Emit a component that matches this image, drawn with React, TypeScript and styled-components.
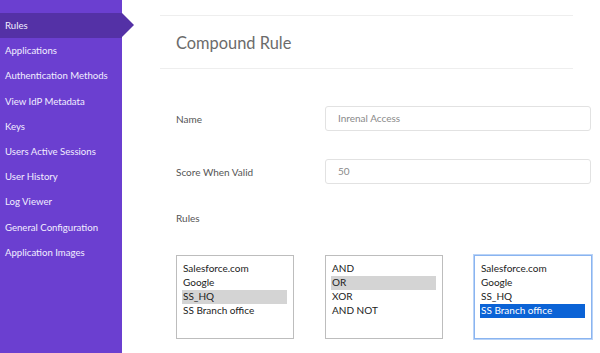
import styled, { createGlobalStyle } from "styled-components";

const GlobalStyle = createGlobalStyle`
  html, body {
    margin: 0;
    padding: 0;
    background: #fff;
    font-family: Lato, "Liberation Sans", sans-serif;
  }
  * { box-sizing: border-box; }
`;

const Page = styled.div`
  display: flex;
  width: 600px;
  height: 353px;
  overflow: hidden;
`;

const Sidebar = styled.nav`
  width: 122px;
  flex-shrink: 0;
  background: #6b3fd0;
  padding-top: 13px;
`;

const NavItem = styled.div<{ $active?: boolean }>`
  position: relative;
  height: 25.2px;
  line-height: 25px;
  padding-left: 5px;
  font-size: 9.6px;
  color: #f2eeff;
  white-space: nowrap;
  background: ${(p) => (p.$active ? "#5431a6" : "transparent")};

  ${(p) =>
    p.$active &&
    `
    &::after {
      content: "";
      position: absolute;
      top: 0;
      right: -12px;
      border-top: 12.5px solid transparent;
      border-bottom: 12.5px solid transparent;
      border-left: 12px solid #5431a6;
    }
  `}
`;

const Main = styled.main`
  flex: 1;
  padding: 15px 0 0 38px;
`;

const Header = styled.div`
  width: 413px;
  height: 54px;
  border-top: 1px solid #eeeeee;
  border-bottom: 1px solid #eeeeee;
  display: flex;
  align-items: center;
  padding-left: 16px;
`;

const Title = styled.h1`
  margin: 0;
  font-size: 16.4px;
  font-weight: 400;
  color: #6b6b6b;
`;

const Form = styled.div`
  padding: 37px 0 0 16px;
`;

const Row = styled.div<{ $gap: number }>`
  display: flex;
  align-items: center;
  margin-bottom: ${(p) => p.$gap}px;
`;

const Label = styled.div`
  width: 149px;
  font-size: 10px;
  color: #555;
`;

const Input = styled.div`
  width: 266px;
  height: 25px;
  border: 1px solid #e2e2e2;
  border-radius: 3px;
  padding-left: 12px;
  line-height: 23px;
  font-size: 10px;
  color: #8a8a8a;
`;

const RulesLabel = styled(Label)`
  margin-bottom: 31px;
`;

const Lists = styled.div`
  display: flex;
  gap: 31px;
`;

const ListBox = styled.div<{ $focused?: boolean }>`
  width: 118px;
  height: 84px;
  border: 1px solid ${(p) => (p.$focused ? "#8ab4f0" : "#bdbdbd")};
  box-shadow: ${(p) => (p.$focused ? "0 0 0 1px #b9d3f7" : "none")};
  padding: 6px 6px 0 5px;
`;

const Option = styled.div<{ $sel?: "gray" | "blue" }>`
  height: 14px;
  line-height: 13px;
  font-size: 10px;
  padding-left: 1px;
  white-space: nowrap;
  color: ${(p) => (p.$sel === "blue" ? "#fff" : "#222")};
  background: ${(p) =>
    p.$sel === "gray" ? "#d4d4d4" : p.$sel === "blue" ? "#0b63d6" : "transparent"};
`;

const nav = [
  "Rules",
  "Applications",
  "Authentication Methods",
  "View IdP Metadata",
  "Keys",
  "Users Active Sessions",
  "User History",
  "Log Viewer",
  "General Configuration",
  "Application Images",
];

export default function App() {
  return (
    <Page>
      <GlobalStyle />
      <Sidebar>
        {nav.map((n, i) => (
          <NavItem key={n} $active={i === 0}>
            {n}
          </NavItem>
        ))}
      </Sidebar>
      <Main>
        <Header>
          <Title>Compound Rule</Title>
        </Header>
        <Form>
          <Row $gap={28}>
            <Label>Name</Label>
            <Input>Inrenal Access</Input>
          </Row>
          <Row $gap={28}>
            <Label>Score When Valid</Label>
            <Input>50</Input>
          </Row>
          <RulesLabel>Rules</RulesLabel>
          <Lists>
            <ListBox>
              <Option>Salesforce.com</Option>
              <Option>Google</Option>
              <Option $sel="gray">SS_HQ</Option>
              <Option>SS Branch office</Option>
            </ListBox>
            <ListBox>
              <Option>AND</Option>
              <Option $sel="gray">OR</Option>
              <Option>XOR</Option>
              <Option>AND NOT</Option>
            </ListBox>
            <ListBox $focused>
              <Option>Salesforce.com</Option>
              <Option>Google</Option>
              <Option>SS_HQ</Option>
              <Option $sel="blue">SS Branch office</Option>
            </ListBox>
          </Lists>
        </Form>
      </Main>
    </Page>
  );
}
